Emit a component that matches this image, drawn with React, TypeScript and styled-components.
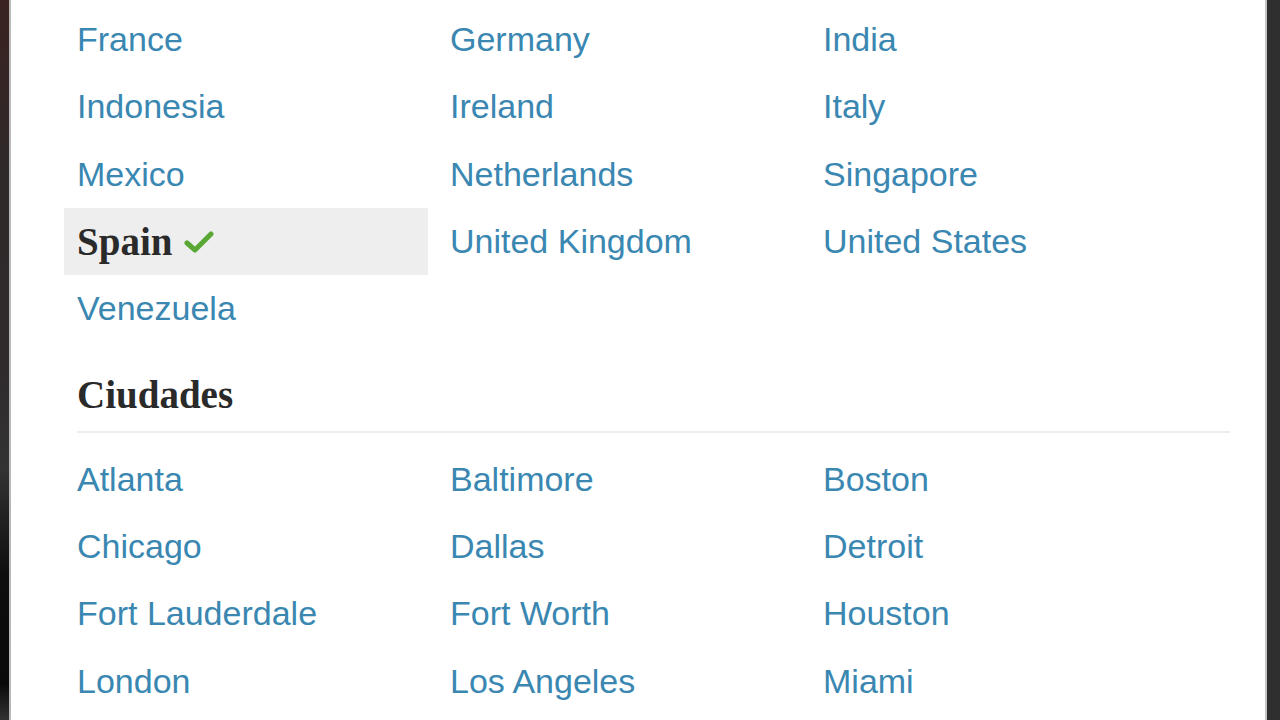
import styled, { createGlobalStyle } from "styled-components";

const GlobalStyle = createGlobalStyle`
  html, body {
    margin: 0;
    padding: 0;
    background: #2c2c2c;
    overflow: hidden;
  }
`;

const countries = [
  "France", "Germany", "India",
  "Indonesia", "Ireland", "Italy",
  "Mexico", "Netherlands", "Singapore",
  "Spain", "United Kingdom", "United States",
  "Venezuela",
];

const cities = [
  "Atlanta", "Baltimore", "Boston",
  "Chicago", "Dallas", "Detroit",
  "Fort Lauderdale", "Fort Worth", "Houston",
  "London", "Los Angeles", "Miami",
];

const selected = "Spain";

const Check = () => (
  <svg width="30" height="24" viewBox="0 0 30 24">
    <path
      d="M3 13 L11 20 L27 4"
      fill="none"
      stroke="#5aa834"
      strokeWidth="5"
      strokeLinecap="round"
      strokeLinejoin="round"
    />
  </svg>
);

const App = () => {
  return (
    <>
      <GlobalStyle />
      <Page>
        <LeftEdge />
        <Panel>
          <Grid>
            {countries.map((name) =>
              name === selected ? (
                <Item key={name} $active>
                  <Current>{name}</Current>
                  <Check />
                </Item>
              ) : (
                <Item key={name}>
                  <Link>{name}</Link>
                </Item>
              )
            )}
          </Grid>
          <Heading>Ciudades</Heading>
          <Divider />
          <Grid>
            {cities.map((name) => (
              <Item key={name}>
                <Link>{name}</Link>
              </Item>
            ))}
          </Grid>
        </Panel>
        <RightEdge />
      </Page>
    </>
  );
};

export default App;

const Page = styled.div`
  display: flex;
  width: 1280px;
  height: 720px;
  overflow: hidden;
`;

const LeftEdge = styled.div`
  width: 9px;
  flex-shrink: 0;
  background: linear-gradient(
    to bottom,
    #3a2220 0%,
    #2e2a2a 25%,
    #2f2a2b 50%,
    #333 65%,
    #0e0e0e 80%,
    #0a0a0a 95%,
    #333 100%
  );
  border-right: 2px solid #b8b8b8;
`;

const RightEdge = styled.div`
  width: 13px;
  flex-shrink: 0;
  background: #2f2f2f;
  border-left: 2px solid #c4c4c4;
`;

const Panel = styled.div`
  flex: 1;
  background: #ffffff;
  padding: 6px 0 0 53px;
  display: flex;
  flex-direction: column;
`;

const Grid = styled.div`
  display: grid;
  grid-template-columns: repeat(3, 364px);
  column-gap: 9px;
  grid-auto-rows: 67.3px;
`;

const Item = styled.div<{ $active?: boolean }>`
  display: flex;
  align-items: center;
  gap: 12px;
  padding-left: 13px;
  background: ${(p) => (p.$active ? "#eeeeee" : "transparent")};
`;

const Link = styled.a`
  font-family: "Liberation Sans", Arial, sans-serif;
  font-size: 34px;
  color: #3a87b2;
  text-decoration: none;
  cursor: pointer;
`;

const Current = styled.span`
  font-family: "Liberation Serif", "Times New Roman", serif;
  font-weight: bold;
  font-size: 39px;
  color: #2a2a2a;
`;

const Heading = styled.h3`
  margin: 31px 0 0 13px;
  height: 44px;
  line-height: 44px;
  font-family: "Liberation Serif", "Times New Roman", serif;
  font-weight: bold;
  font-size: 39px;
  color: #2a2a2a;
`;

const Divider = styled.hr`
  margin: 14px 35px 12px 13px;
  border: none;
  border-top: 2px solid #ededed;
`;
